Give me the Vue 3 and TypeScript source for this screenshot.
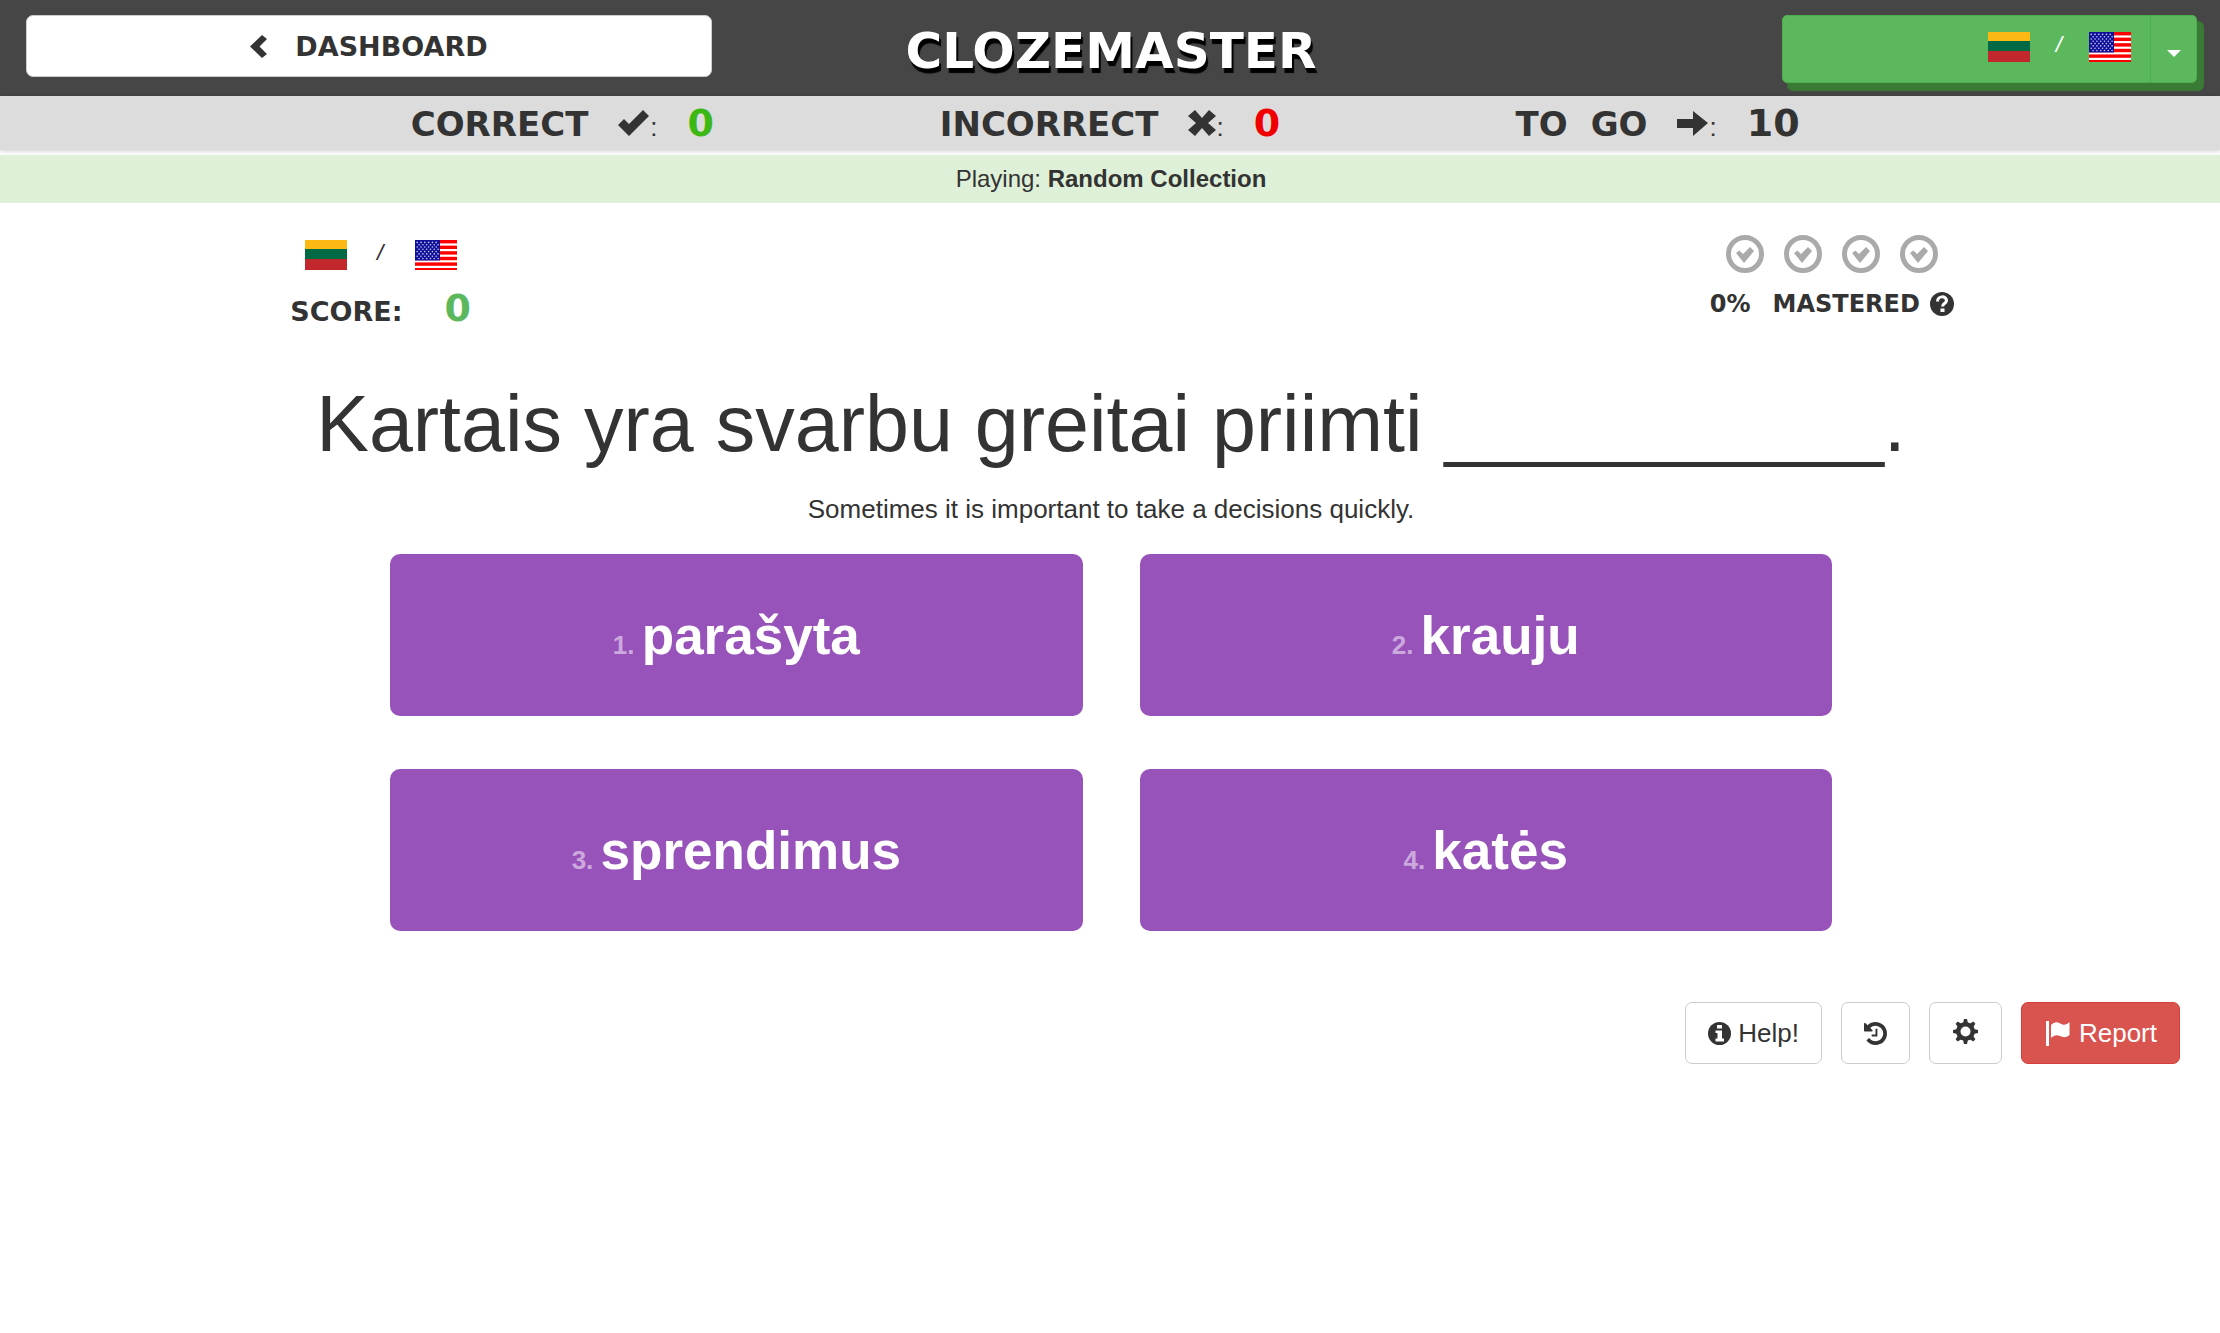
<script setup lang="ts">
import { ref } from 'vue'

interface Stat {
  label: string
  icon: 'ok' | 'remove' | 'arrow'
  value: number
  tone: string
}

const stats: Stat[] = [
  { label: 'CORRECT', icon: 'ok', value: 0, tone: 'good' },
  { label: 'INCORRECT', icon: 'remove', value: 0, tone: 'bad' },
  { label: 'TO GO', icon: 'arrow', value: 10, tone: 'plain' },
]

const iconPaths: Record<Stat['icon'], string> = {
  ok: 'M0 15 L6 9 L11 14 L25 0 L31 6 L11 26 Z',
  remove: 'M7 0 L14 8 L21 0 L28 6 L20 13 L28 20 L21 26 L14 18 L7 26 L0 20 L8 13 L0 6 Z',
  arrow: 'M0 9 H16 V1 L31 13 L16 26 V18 H0 Z',
}

const answers = ['parašyta', 'krauju', 'sprendimus', 'katės']
const masteryLevels = 4
const blank = '_'.repeat(10)
const selected = ref<number | null>(null)

const stripes = [0, 1, 2, 3, 4, 5].map((i) => ({ y: i * 5.6, h: i === 5 ? 2 : 3.4 }))
const stars: { x: number; y: number }[] = []
for (let row = 0; row < 8; row++) {
  for (let col = 0; col < 6; col++) {
    stars.push({ x: 2.2 + col * 3.8 + (row % 2) * 1.9, y: 2.4 + row * 2.3 })
  }
}
const gearTeeth = [0, 45, 90, 135, 180, 225, 270, 315]
</script>

<template>
  <div class="page">
    <header class="topbar">
      <div class="cell back">
        <a class="dashboard" href="#dashboard">
          <svg width="17" height="23" viewBox="0 0 17 23" aria-hidden="true">
            <path d="M12 0 L17 4 L9.500 11.500 L17 19 L12 23 L0 11.500 Z" />
          </svg>
          <span>DASHBOARD</span>
        </a>
      </div>
      <div class="cell brand"><a class="logo" href="#home">CLOZEMASTER</a></div>
      <div class="cell langs">
        <div class="pair-group">
          <button class="pair" type="button" aria-label="Lithuanian from English">
            <svg class="flag" viewBox="0 0 42 30" aria-hidden="true">
              <rect width="42" height="30" fill="#c1272d" />
              <rect width="42" height="19" fill="#006a44" />
              <rect width="42" height="9" fill="#fdb913" />
            </svg>
            <span class="slash">/</span>
            <svg class="flag" viewBox="0 0 42 30" aria-hidden="true">
              <rect width="42" height="30" fill="#fff" />
              <rect v-for="s in stripes" :key="s.y" :y="s.y" width="42" :height="s.h" fill="#f00" />
              <rect width="25" height="20.500" fill="#10109a" />
              <circle v-for="(s, i) in stars" :key="i" :cx="s.x" :cy="s.y" r="0.8" fill="#c8c8f0" />
            </svg>
          </button>
          <button class="toggle" type="button" aria-label="Choose language pair">
            <svg width="14" height="7" viewBox="0 0 14 7" aria-hidden="true"><path d="M0 0 H14 L7 7 Z" /></svg>
          </button>
        </div>
      </div>
    </header>

    <section class="stats">
      <div class="stats-inner">
        <div v-for="stat in stats" :key="stat.label" class="stat">
          <span class="words"><span v-for="word in stat.label.split(' ')" :key="word">{{ word }}</span></span>
          <span class="mark">
            <svg :width="stat.icon === 'remove' ? 28 : 32" height="26" :viewBox="stat.icon === 'remove' ? '0 0 28 26' : '0 0 32 26'" aria-hidden="true">
              <path :d="iconPaths[stat.icon]" />
            </svg><span class="colon">:</span>
          </span>
          <span class="count" :class="stat.tone">{{ stat.value }}</span>
        </div>
      </div>
    </section>

    <p class="playing">Playing: <b>Random Collection</b></p>

    <main>
      <div class="status">
        <div class="score-box">
          <div class="flags">
            <svg class="flag" viewBox="0 0 42 30" aria-hidden="true">
              <rect width="42" height="30" fill="#c1272d" />
              <rect width="42" height="19" fill="#006a44" />
              <rect width="42" height="9" fill="#fdb913" />
            </svg>
            <span class="slash">/</span>
            <svg class="flag" viewBox="0 0 42 30" aria-hidden="true">
              <rect width="42" height="30" fill="#fff" />
              <rect v-for="s in stripes" :key="s.y" :y="s.y" width="42" :height="s.h" fill="#f00" />
              <rect width="25" height="20.500" fill="#10109a" />
              <circle v-for="(s, i) in stars" :key="i" :cx="s.x" :cy="s.y" r="0.8" fill="#c8c8f0" />
            </svg>
          </div>
          <div class="score"><span>SCORE:</span><span class="points">0</span></div>
        </div>

        <div class="mastery-box">
          <div class="circles">
            <svg v-for="n in masteryLevels" :key="n" width="38" height="38" viewBox="0 0 38 38" aria-hidden="true">
              <circle cx="19" cy="19" r="16.500" fill="none" stroke="#aaa" stroke-width="5" />
              <path d="M10 18 L13.500 15.500 L17 19 L24 12 L28 16 L18 28 Z" fill="#aaa" />
            </svg>
          </div>
          <div class="mastered">
            <span>0%</span>
            <span>MASTERED</span>
            <a href="#mastery-help" aria-label="What is mastered?">
              <svg width="24" height="24" viewBox="0 0 24 24" aria-hidden="true">
                <circle cx="12" cy="12" r="12" />
                <path d="M7.500 9.500 C7.500 3.500 16.500 3.500 16.500 8.500 C16.500 11.500 12.500 11.500 12.500 14.500" fill="none" stroke="#fff" stroke-width="3" />
                <rect x="10.500" y="16.500" width="4" height="3.500" fill="#fff" />
              </svg>
            </a>
          </div>
        </div>
      </div>

      <h1 class="sentence">Kartais yra svarbu greitai priimti {{ blank }}.</h1>
      <p class="translation">Sometimes it is important to take a decisions quickly.</p>

      <div class="answers">
        <button v-for="(word, i) in answers" :key="word" type="button" class="answer" @click="selected = i">
          <span><span class="num">{{ i + 1 }}. </span>{{ word }}</span>
        </button>
      </div>
    </main>

    <footer class="tools">
      <button type="button" class="tool">
        <svg width="23" height="23" viewBox="0 0 23 23" aria-hidden="true">
          <circle cx="11.500" cy="11.500" r="11.500" />
          <path d="M9 3 H14 V6.500 H9 Z M7.500 8.500 H14 V16.500 H16 V19.500 H7.500 V16.500 H9.500 V11 H7.500 Z" fill="#fff" />
        </svg>
        <span>Help!</span>
      </button>
      <button type="button" class="tool" aria-label="History">
        <svg width="23" height="23" viewBox="0 128 1536 1536" aria-hidden="true">
          <path d="M1536 896q0 156-61 298t-164 245-245 164-298 61q-172 0-327-72.500t-264-204.500q-7-10-6.500-22.500t8.500-20.500l137-138q10-9 25-9 16 2 23 12 73 95 179 147t225 52q104 0 198.500-40.500t163.500-109.500 109.500-163.500 40.500-198.500-40.500-198.500-109.500-163.500-163.500-109.500-198.500-40.500q-98 0-188 35.500t-160 101.500l137 138q31 30 14 69-17 40-59 40h-448q-26 0-45-19t-19-45v-448q0-42 40-59 39-17 69 14l130 129q107-101 244.500-156.500t284.500-55.500q156 0 298 61t245 164 164 245 61 298zm-640-288v448q0 14-9 23t-23 9h-320q-14 0-23-9t-9-23v-64q0-14 9-23t23-9h224v-352q0-14 9-23t23-9h64q14 0 23 9t9 23z" />
        </svg>
      </button>
      <button type="button" class="tool gear" aria-label="Settings">
        <svg width="25" height="25" viewBox="0 0 25 25" aria-hidden="true">
          <circle cx="12.500" cy="12.500" r="7.200" fill="none" stroke="#333" stroke-width="4.400" />
          <path v-for="a in gearTeeth" :key="a" d="M10 4.500 L11 0 H14 L15 4.500 Z" :transform="`rotate(${a} 12.500 12.500)`" />
        </svg>
      </button>
      <button type="button" class="tool report">
        <svg width="24" height="25" viewBox="0 0 24 25" aria-hidden="true">
          <path d="M0 0 H3 V25 H0 Z M5 4 C9 0 12 1 15 3 C18 4.500 21 3.500 23.500 1 V14 C20 17 17 16.500 14 15 C11 13.500 8 14 5 17 Z" />
        </svg>
        <span>Report</span>
      </button>
    </footer>
  </div>
</template>

<style>
body {
  margin: 0;
  background: #fff;
}
</style>

<style scoped>
.page {
  color: #333;
  font-family: "Liberation Sans", Arial, sans-serif;
  font-size: 26px;
}
button {
  font: inherit;
  cursor: pointer;
}
a {
  color: inherit;
  text-decoration: none;
}
svg {
  display: block;
  flex: none;
  fill: currentColor;
}
p,
h1 {
  margin: 0;
}
.dashboard,
.logo,
.stats,
.score,
.mastered {
  font-family: "DejaVu Sans", sans-serif;
  font-weight: bold;
}

/* Top bar */
.topbar {
  display: grid;
  grid-template-columns: repeat(3, 1fr);
  background: #464646;
}
.cell {
  padding: 15px 28px 13px 26px;
}
.dashboard {
  display: flex;
  align-items: center;
  justify-content: center;
  gap: 28px;
  height: 60px;
  border: 1px solid #ccc;
  border-radius: 7px;
  background: #fff;
  font-size: 27px;
}
.cell.brand {
  display: flex;
  align-items: center;
  justify-content: center;
  padding: 17px 26px 11px 28px;
}
.logo {
  color: #fff;
  font-size: 50px;
  line-height: 64px;
  text-shadow: 2px 5px 1px #000;
}
.cell.langs {
  display: flex;
  justify-content: flex-end;
  padding-right: 23px;
}
.pair-group {
  display: flex;
  width: 415px;
  height: 68px;
  border-radius: 5px;
  box-shadow: 6px 7px 1px 1px #397a35;
}
.pair,
.toggle {
  display: flex;
  align-items: center;
  border: 1px solid #4cae4c;
  background: #5cb85c;
  color: #fff;
}
.pair {
  flex: 1;
  justify-content: flex-end;
  padding: 0 19px 4px;
  border-radius: 5px 0 0 5px;
}
.toggle {
  width: 46px;
  justify-content: center;
  padding: 9px 0 0;
  border-left: 0;
  border-radius: 0 5px 5px 0;
}
.flag {
  width: 42px;
  height: 30px;
}
.slash {
  width: 59px;
  padding-bottom: 8px;
  font-size: 20px;
  line-height: 24px;
  font-family: "DejaVu Sans Mono", monospace;
  text-align: center;
}

/* Round counters */
.stats {
  margin-bottom: 5px;
  background: #dcdcdc;
  box-shadow: 0 1px 5px rgba(0, 0, 0, 0.2);
  font-size: 34px;
}
.stats-inner {
  display: grid;
  grid-template-columns: repeat(3, 1fr);
  width: 74%;
  margin: 0 auto;
}
.stat {
  display: flex;
  align-items: baseline;
  justify-content: center;
  gap: 30px;
  height: 52px;
  padding-top: 2px;
  line-height: 50px;
}
.words {
  display: flex;
  gap: 23px;
}
.mark {
  display: flex;
  align-items: baseline;
}
.colon {
  font: 26px/30px "Liberation Sans", Arial, sans-serif;
}
.count {
  font-size: 38px;
}
.good {
  color: #3cb814;
}
.bad {
  color: #f00000;
}

.playing {
  padding-left: 2px;
  background: #dff0d8;
  font-size: 24px;
  line-height: 48px;
  text-align: center;
}

/* Score and mastery */
main {
  padding-left: 2px;
}
.status {
  display: flex;
  justify-content: space-between;
  padding: 32px 12% 0 13%;
}
.score-box,
.mastery-box {
  display: flex;
  flex-direction: column;
  align-items: center;
}
.score-box {
  gap: 17px;
  padding-top: 4px;
}
.flags {
  display: flex;
  align-items: center;
}
.flags .slash {
  width: 68px;
}
.score {
  display: flex;
  align-items: baseline;
  gap: 42px;
  height: 41px;
  font-size: 27px;
  line-height: 40px;
}
.points {
  color: #5cb85c;
  font-size: 38px;
}
.mastery-box {
  gap: 17px;
}
.circles {
  display: flex;
  gap: 20px;
}
.mastered {
  display: flex;
  align-items: center;
  gap: 10px;
  font-size: 24px;
  line-height: 28px;
}
.mastered span:first-child {
  margin-right: 12px;
}

/* Sentence */
.sentence {
  margin-top: 51px;
  font-size: 79px;
  font-weight: normal;
  line-height: 88px;
  text-align: center;
}
.translation {
  margin-top: 23px;
  line-height: 36px;
  text-align: center;
}
.answers {
  display: grid;
  grid-template-columns: 1fr 1fr;
  gap: 53px 57px;
  width: 65%;
  margin: 27px auto 0;
}
.answer {
  min-height: 162px;
  padding: 0;
  border: 0;
  border-radius: 10px;
  background: #9853bb;
  color: #fff;
  font-size: 53px;
  font-weight: bold;
}
.num {
  color: rgba(255, 255, 255, 0.5);
  font-size: 26px;
}

/* Tools */
.tools {
  display: flex;
  justify-content: flex-end;
  gap: 19px;
  padding: 71px 40px 40px;
}
.tool {
  display: flex;
  align-items: center;
  gap: 7px;
  height: 62px;
  padding: 0 22px;
  border: 1px solid #ccc;
  border-radius: 7px;
  background: #fff;
  color: #333;
}
.gear {
  padding: 0 23px 4px;
}
.report {
  gap: 9px;
  padding: 0 22px 0 24px;
  border-color: #d43f3a;
  background: #d9534f;
  color: #fff;
}
</style>
